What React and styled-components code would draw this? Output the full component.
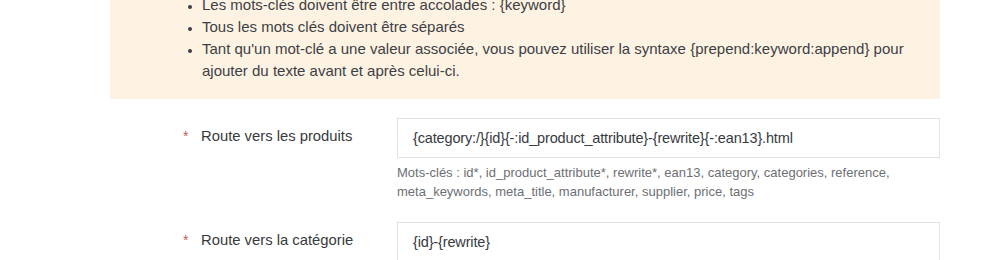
import React from "react";
import styled, { createGlobalStyle } from "styled-components";

const GlobalStyle = createGlobalStyle`
  html, body {
    margin: 0;
    padding: 0;
    background: #ffffff;
  }
  body {
    font-family: "Liberation Sans", Arial, sans-serif;
    color: #363a41;
    overflow: hidden;
  }
`;

const Page = styled.div`
  width: 1000px;
  height: 260px;
  overflow: hidden;
`;

const Content = styled.div`
  margin-top: -22px;
  margin-left: 110px;
  width: 830px;
`;

const Alert = styled.div`
  background: #fef3e2;
  padding: 16px 30px 17px 0;
  ul {
    margin: 0;
    padding-left: 92px;
    list-style: disc;
  }
  li {
    font-size: 15px;
    line-height: 22px;
    color: #3c4046;
  }
  li::marker {
    font-size: 12px;
  }
`;

const Form = styled.div`
  display: flex;
  flex-direction: column;
  gap: 21px;
  padding-top: 19px;
`;

const Row = styled.div`
  display: grid;
  grid-template-columns: 287px 1fr;
  align-items: start;
`;

const Label = styled.label`
  display: flex;
  align-items: center;
  height: 38px;
  padding-left: 73px;
  font-size: 14.8px;
  color: #363a41;
  margin-top: -1px;
`;

const Required = styled.span`
  color: #c05c67;
  width: 18px;
  font-size: 14px;
`;

const Field = styled.div`
  display: flex;
  flex-direction: column;
`;

const Input = styled.div`
  height: 38px;
  border: 1px solid #e2e2e2;
  display: flex;
  align-items: center;
  padding: 0 15px;
  font-size: 14.5px;
  color: #363a41;
  letter-spacing: -0.15px;
`;

const Help = styled.p`
  margin: 5px 0 0;
  font-size: 13px;
  line-height: 19px;
  color: #6c6f75;
`;

const FormRow = ({ label, value, help }) => (
  <Row>
    <Label>
      <Required>*</Required>
      {label}
    </Label>
    <Field>
      <Input>{value}</Input>
      {help && <Help>{help}</Help>}
    </Field>
  </Row>
);

export default function App() {
  return (
    <Page>
      <GlobalStyle />
      <Content>
        <Alert>
          <ul>
            <li>Les mots-clés doivent être entre accolades : {"{keyword}"}</li>
            <li>Tous les mots clés doivent être séparés</li>
            <li>
              Tant qu'un mot-clé a une valeur associée, vous pouvez utiliser la
              syntaxe {"{prepend:keyword:append}"} pour ajouter du texte avant
              et après celui-ci.
            </li>
          </ul>
        </Alert>
        <Form>
          <FormRow
            label="Route vers les produits"
            value="{category:/}{id}{-:id_product_attribute}-{rewrite}{-:ean13}.html"
            help={
              <>
                Mots-clés : id*, id_product_attribute*, rewrite*, ean13,
                category, categories, reference,
                <br />
                meta_keywords, meta_title, manufacturer, supplier, price, tags
              </>
            }
          />
          <FormRow label="Route vers la catégorie" value="{id}-{rewrite}" />
        </Form>
      </Content>
    </Page>
  );
}
